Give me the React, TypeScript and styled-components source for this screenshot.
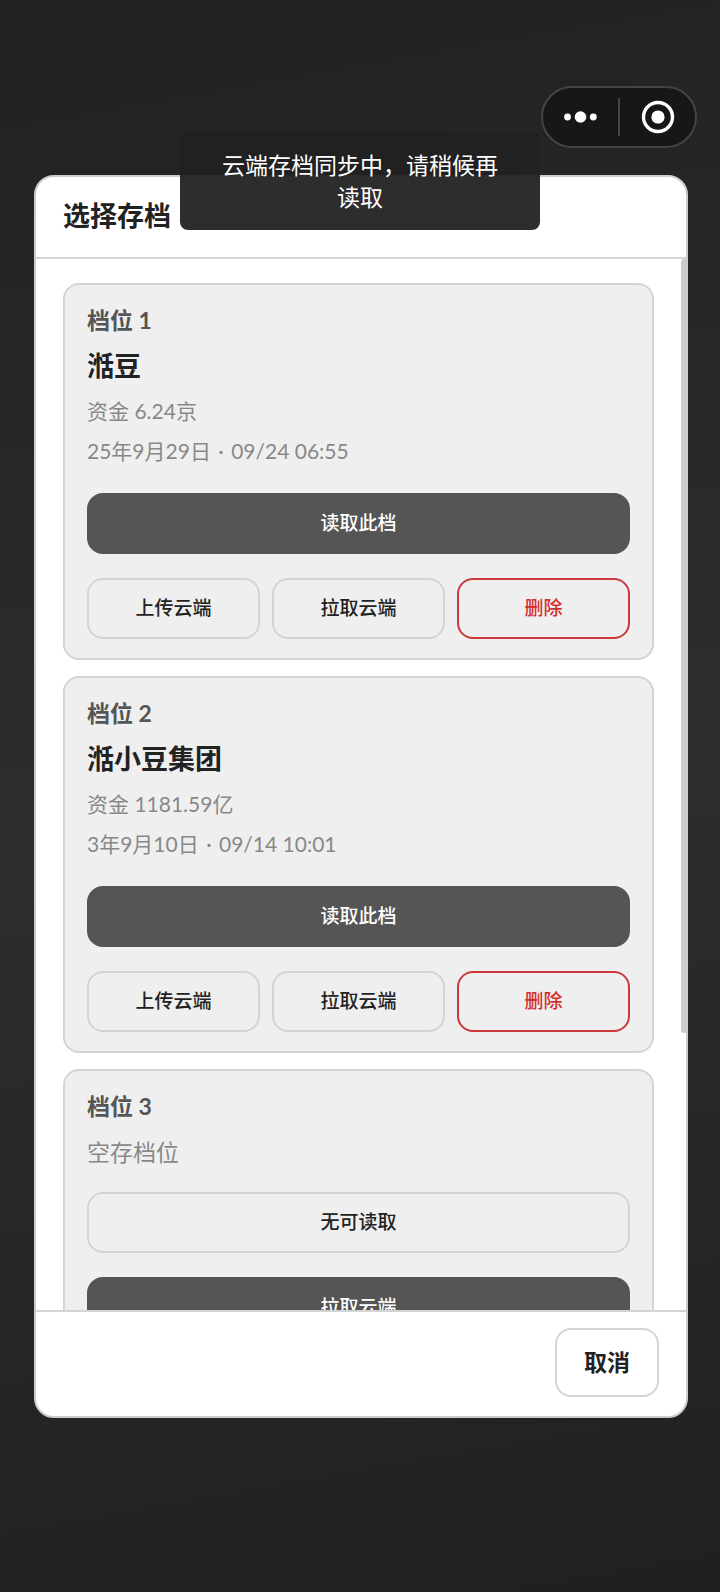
import React from 'react';
import styled, { createGlobalStyle, css } from 'styled-components';

const GlobalStyle = createGlobalStyle`
  *, *::before, *::after { box-sizing: border-box; }
  body {
    margin: 0;
    background: #222;
    font-family: Lato, "Noto Sans CJK SC", sans-serif;
    color: #222;
  }
  h1, h2, p { margin: 0; }
`;

const Stage = styled.main`
  position: relative;
  display: flex;
  height: 100vh;
  padding: 175px 32px 174px 34px;
  background: linear-gradient(170deg, #212121 0%, #2d2d2d 50%, #202020 100%);
`;

const Capsule = styled.div`
  position: absolute;
  top: 86px;
  right: 23px;
  display: flex;
  align-items: center;
  width: 156px;
  height: 62px;
  border: 2px solid #444;
  border-radius: 31px;
  background: #171717;
`;

const CapsuleButton = styled.button`
  flex: 1;
  display: flex;
  align-items: center;
  justify-content: center;
  height: 100%;
  padding: 0;
  border: 0;
  background: none;
  color: #fff;
`;

const CapsuleDivider = styled.span`
  width: 2px;
  height: 38px;
  background: #464646;
`;

const Toast = styled.div`
  position: absolute;
  top: 133px;
  left: 50%;
  width: 50%;
  padding: 16px 40px 17px;
  transform: translateX(-50%);
  border-radius: 8px;
  background: rgba(34, 34, 34, 0.95);
  color: #fff;
  font-size: 23px;
  line-height: 32px;
  text-align: center;
`;

const Dialog = styled.section`
  flex: 1;
  min-width: 0;
  display: flex;
  flex-direction: column;
  border: 2px solid #ccc;
  border-radius: 20px;
  background: #fff;
`;

const DialogHeader = styled.header`
  padding: 20px 27px 22px;
  border-bottom: 2px solid #d4d4d4;
`;

const DialogTitle = styled.h1`
  font-size: 27px;
  line-height: 38px;
  font-weight: 700;
`;

const DialogBody = styled.div`
  position: relative;
  flex: 1;
  min-height: 0;
  display: flex;
`;

const SlotList = styled.div`
  flex: 1;
  min-width: 0;
  display: flex;
  flex-direction: column;
  gap: 16px;
  padding: 24px 32px 24px 27px;
  overflow-y: auto;
  scrollbar-width: none;
`;

const ScrollThumb = styled.span`
  position: absolute;
  top: 0;
  right: -2px;
  width: 7px;
  height: 73.6%;
  border-radius: 4px;
  background: #ccc;
`;

const DialogFooter = styled.footer`
  display: flex;
  justify-content: flex-end;
  padding: 16px 27px 19px;
  border-top: 2px solid #d4d4d4;
`;

const SlotCard = styled.article`
  flex: none;
  padding: 20px 22px 19px;
  border: 2px solid #d4d4d4;
  border-radius: 16px;
  background: #efefef;
`;

const SlotLabel = styled.p`
  color: #555;
  font-size: 23px;
  line-height: 30px;
  font-weight: 700;
`;

const SlotName = styled.h2`
  margin-top: 10px;
  font-size: 27px;
  line-height: 42px;
  font-weight: 700;
`;

const SlotMeta = styled.p`
  margin-top: 8px;
  color: #888;
  font-size: 21px;
  line-height: 32px;
`;

const Separator = styled.span`
  margin: 0 2px;
`;

const EmptyNote = styled.p`
  margin-top: 18px;
  color: #888;
  font-size: 23px;
  line-height: 27px;
`;

const Actions = styled.div`
  display: flex;
  flex-direction: column;
  gap: 24px;
  margin-top: 26px;
`;

const ActionRow = styled.div`
  display: grid;
  grid-template-columns: repeat(3, 1fr);
  gap: 12px;
`;

type Tone = 'solid' | 'outline' | 'danger';

const tones = {
  solid: css`
    border-color: #555;
    background: #555;
    color: #fff;
  `,
  outline: css`
    border-color: #d4d4d4;
    background: transparent;
    color: #222;
  `,
  danger: css`
    border-color: #cc383c;
    background: transparent;
    color: #d32f2f;
  `,
};

const ActionButton = styled.button<{ $tone: Tone }>`
  height: 61px;
  padding: 0 0 2px;
  border: 2px solid;
  border-radius: 16px;
  font-family: inherit;
  font-size: 19px;
  line-height: 28px;
  font-weight: 500;
  ${({ $tone }) => tones[$tone]}
`;

const CancelButton = styled.button`
  height: 69px;
  padding: 0 27px 2px;
  border: 2px solid #d4d4d4;
  border-radius: 16px;
  background: #fff;
  color: #222;
  font-family: inherit;
  font-size: 23px;
  line-height: 32px;
  font-weight: 700;
`;

interface Slot {
  id: number;
  name?: string;
  funds?: string;
  date?: string;
  savedAt?: string;
}

const slots: Slot[] = [
  { id: 1, name: '湉豆', funds: '6.24京', date: '25年9月29日', savedAt: '09/24 06:55' },
  { id: 2, name: '湉小豆集团', funds: '1181.59亿', date: '3年9月10日', savedAt: '09/14 10:01' },
  { id: 3 },
];

function SaveSlot({ slot }: { slot: Slot }) {
  return (
    <SlotCard>
      <SlotLabel>档位 {slot.id}</SlotLabel>
      {slot.name ? (
        <>
          <SlotName>{slot.name}</SlotName>
          <SlotMeta>资金 {slot.funds}</SlotMeta>
          <SlotMeta>
            {slot.date} <Separator>·</Separator> {slot.savedAt}
          </SlotMeta>
          <Actions>
            <ActionButton $tone="solid">读取此档</ActionButton>
            <ActionRow>
              <ActionButton $tone="outline">上传云端</ActionButton>
              <ActionButton $tone="outline">拉取云端</ActionButton>
              <ActionButton $tone="danger">删除</ActionButton>
            </ActionRow>
          </Actions>
        </>
      ) : (
        <>
          <EmptyNote>空存档位</EmptyNote>
          <Actions>
            <ActionButton $tone="outline">无可读取</ActionButton>
            <ActionButton $tone="solid">拉取云端</ActionButton>
          </Actions>
        </>
      )}
    </SlotCard>
  );
}

export default function App() {
  return (
    <>
      <GlobalStyle />
      <Stage>
        <Dialog role="dialog" aria-labelledby="dialog-title">
          <DialogHeader>
            <DialogTitle id="dialog-title">选择存档</DialogTitle>
          </DialogHeader>
          <DialogBody>
            <SlotList>
              {slots.map((slot) => (
                <SaveSlot key={slot.id} slot={slot} />
              ))}
            </SlotList>
            <ScrollThumb />
          </DialogBody>
          <DialogFooter>
            <CancelButton>取消</CancelButton>
          </DialogFooter>
        </Dialog>
        <Capsule>
          <CapsuleButton aria-label="更多">
            <svg width="34" height="12" viewBox="0 0 34 12" fill="currentColor" aria-hidden="true">
              <circle cx="3.5" cy="6" r="3.4" />
              <circle cx="16.5" cy="6" r="5.8" />
              <circle cx="29.3" cy="6" r="3.4" />
            </svg>
          </CapsuleButton>
          <CapsuleDivider />
          <CapsuleButton aria-label="关闭">
            <svg width="34" height="34" viewBox="0 0 34 34" fill="none" aria-hidden="true">
              <circle cx="17" cy="17" r="14.5" stroke="currentColor" strokeWidth="3.4" />
              <circle cx="17" cy="17" r="6.6" fill="currentColor" />
            </svg>
          </CapsuleButton>
        </Capsule>
        <Toast role="status">云端存档同步中，请稍候再读取</Toast>
      </Stage>
    </>
  );
}
